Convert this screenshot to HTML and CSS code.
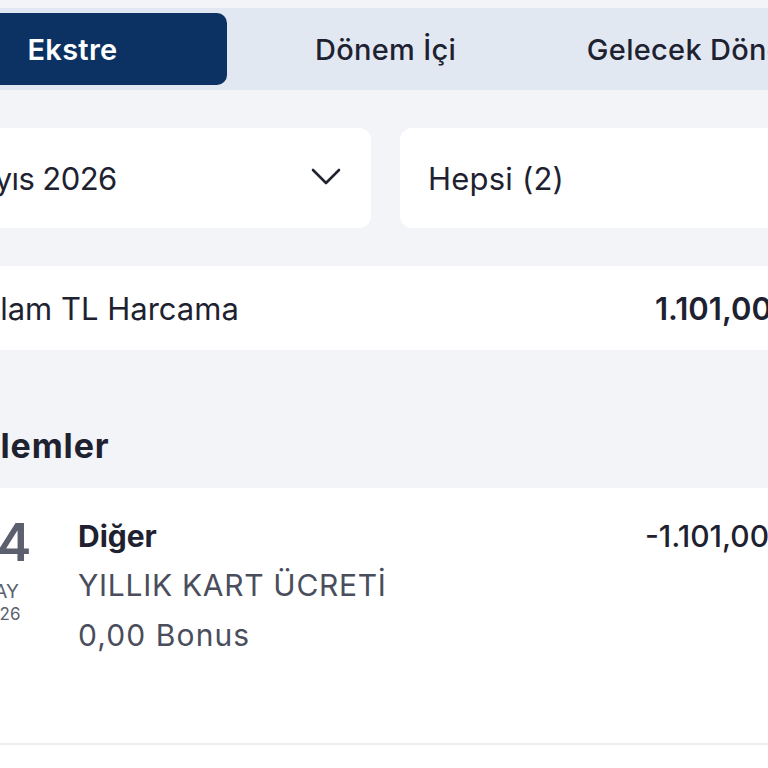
FILE: index.html
```html
<!DOCTYPE html>
<html lang="tr">
<head>
<meta charset="utf-8">
<title>Ekstre</title>
<link rel="stylesheet" href="styles.css">
</head>
<body>
<div class="page">
  <nav class="tabs">
    <div class="tab active">Ekstre</div>
    <div class="tab">Dönem İçi</div>
    <div class="tab">Gelecek Dönem</div>
  </nav>

  <div class="filters">
    <div class="select">
      <span class="month">Mayıs 2026</span>
      <svg class="chev" width="30" height="18" viewBox="0 0 30 18"><path d="M2 2 L15 15 L28 2" fill="none" stroke="#1f2430" stroke-width="2.6" stroke-linecap="round" stroke-linejoin="round"/></svg>
    </div>
    <div class="select">
      <span>Hepsi (2)</span>
    </div>
  </div>

  <div class="total">
    <span class="total-label">Toplam TL Harcama</span>
    <span class="total-amount">1.101,00 TL</span>
  </div>

  <h2 class="section">İşlemler</h2>

  <div class="txn">
    <div class="date">
      <div class="day">14</div>
      <div class="mon">MAY</div>
      <div class="yr">2026</div>
    </div>
    <div class="info">
      <div class="cat">Diğer</div>
      <div class="desc">YILLIK KART ÜCRETİ</div>
      <div class="bonus">0,00 Bonus</div>
    </div>
    <div class="amt">-1.101,00 TL</div>
  </div>
  <div class="next"></div>
</div>
</body>
</html>
```

FILE: styles.css
```css
html, body {
  margin: 0;
  padding: 0;
  background: #f3f4f8;
  overflow: hidden;
  height: 768px;
}
body {
  font-family: Inter, "Noto Sans", sans-serif;
  color: #1e2230;
}
.page {
  margin-left: -88px;
  width: 960px;
  padding-top: 8px;
}
.tabs {
  display: flex;
  gap: 4px;
  padding: 5px 6px;
  background: #e2e8f2;
}
.tab {
  flex: 0 0 309px;
  height: 72px;
  display: flex;
  align-items: center;
  justify-content: center;
  font-size: 29px;
  font-weight: 500;
  letter-spacing: 0.3px;
  color: #1e2230;
  border-radius: 10px;
  white-space: nowrap;
}
.tab.active {
  background: #0b3262;
  color: #fff;
  font-weight: 600;
}
.filters {
  display: flex;
  gap: 29px;
  margin: 38px 0 0 15px;
}
.select {
  flex: 0 0 444px;
  height: 100px;
  box-sizing: border-box;
  background: #fff;
  border-radius: 12px;
  display: flex;
  align-items: center;
  justify-content: space-between;
  padding: 0 30px 0 28px;
  font-size: 31px;
  letter-spacing: 0.2px;
  color: #1e2230;
}
.month { letter-spacing: -0.6px; margin-left: -4px; }
.chev { margin-bottom: 2px; }
.total {
  margin-top: 38px;
  height: 84px;
  background: #fff;
  display: flex;
  align-items: center;
  padding: 0 0 0 33px;
  font-size: 31px;
}
.total-label {
  flex: 0 0 710px;
  color: #1e2230;
}
.total-amount {
  font-weight: 600;
  white-space: nowrap;
}
.section {
  margin: 0;
  height: 138px;
  box-sizing: border-box;
  padding: 79px 0 0 58px;
  font-size: 34px;
  font-weight: 700;
  letter-spacing: 0.9px;
  line-height: 34px;
}
.txn {
  background: #fff;
  height: 257px;
  display: flex;
  border-bottom: 2px solid #eceef2;
  box-sizing: border-box;
  padding-top: 25px;
}
.date {
  flex: 0 0 120px;
  margin-left: 26px;
  text-align: center;
  color: #5b5f6e;
}
.day {
  font-size: 52px;
  font-weight: 600;
  line-height: 60px;
  padding-left: 10px;
}
.mon {
  font-size: 19px;
  line-height: 20px;
  margin-top: 9px;
}
.yr {
  font-size: 17px;
  line-height: 20px;
  margin-top: 2px;
  padding-left: 3px;
}
.info {
  flex: 0 0 567px;
  margin-left: 20px;
  padding-top: 3px;
}
.cat {
  font-size: 30px;
  font-weight: 700;
  line-height: 40px;
  color: #1e2230;
}
.desc, .bonus {
  font-size: 30px;
  color: #4a4e5c;
  line-height: 50px;
  letter-spacing: 0.7px;
}
.bonus { letter-spacing: 1.1px; }
.desc { margin-top: 4px; }
.amt {
  padding-top: 3px;
  font-size: 30px;
  font-weight: 500;
  line-height: 40px;
  white-space: nowrap;
}
.next {
  height: 40px;
  background: #fff;
}
```
